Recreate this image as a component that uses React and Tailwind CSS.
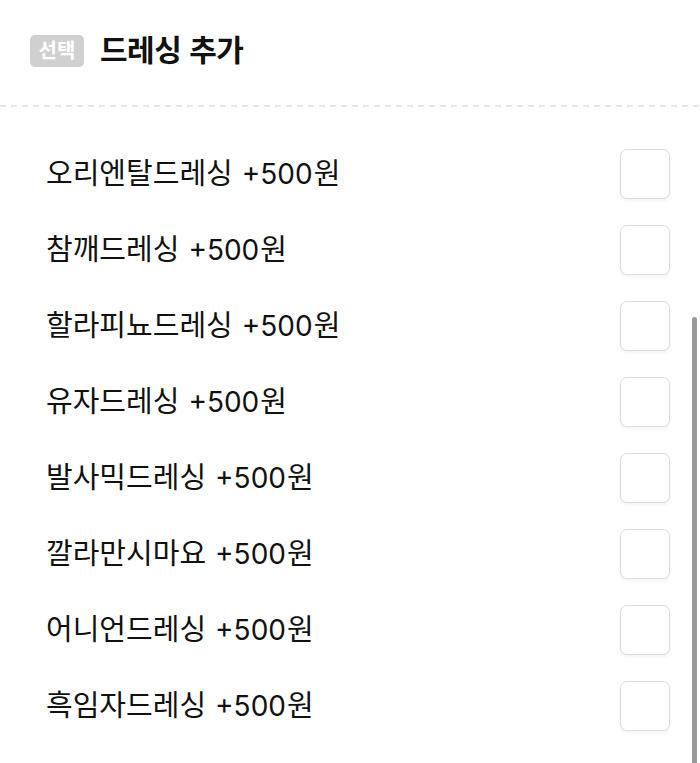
import React from "react";

const items = [
  "오리엔탈드레싱",
  "참깨드레싱",
  "할라피뇨드레싱",
  "유자드레싱",
  "발사믹드레싱",
  "깔라만시마요",
  "어니언드레싱",
  "흑임자드레싱",
];

export default function App() {
  return (
    <div className="relative w-[700px] h-[763px] overflow-hidden bg-white text-[#111] font-['Liberation_Sans','Noto_Sans_CJK_KR',sans-serif]">
      <div className="flex items-center h-[105px] pl-[30px] pb-[4px]">
        <span className="flex items-center justify-center w-[54px] h-[32px] rounded-[5px] bg-[#d0d0d0] text-white text-[20px] font-bold leading-none">
          선택
        </span>
        <h1 className="ml-[16px] text-[30px] font-bold leading-none tracking-[-0.5px]">
          드레싱 추가
        </h1>
      </div>
      <div className="h-[2px] w-full bg-[repeating-linear-gradient(to_right,#e6e6e6_0_6px,transparent_6px_11px)]" />
      <ul className="pt-[29px]">
        {items.map((name) => (
          <li key={name} className="flex items-center justify-between h-[76px] pl-[46px] pr-[30px]">
            <span className="flex items-baseline text-[29px] leading-none whitespace-nowrap">
              <span>{name}</span>
              <span className="ml-[9px] text-[28px] font-['Inter','Noto_Sans_CJK_KR',sans-serif]">+500</span>
              <span className="ml-[1px]">원</span>
            </span>
            <span className="block w-[50px] h-[50px] rounded-[7px] border-[1.5px] border-[#dcdcdc] bg-white shadow-[0_2px_3px_rgba(0,0,0,0.05)]" />
          </li>
        ))}
      </ul>
      <div className="absolute left-[692px] top-[317px] w-[5px] h-[460px] rounded-full bg-[#9a9a9a]" />
    </div>
  );
}
